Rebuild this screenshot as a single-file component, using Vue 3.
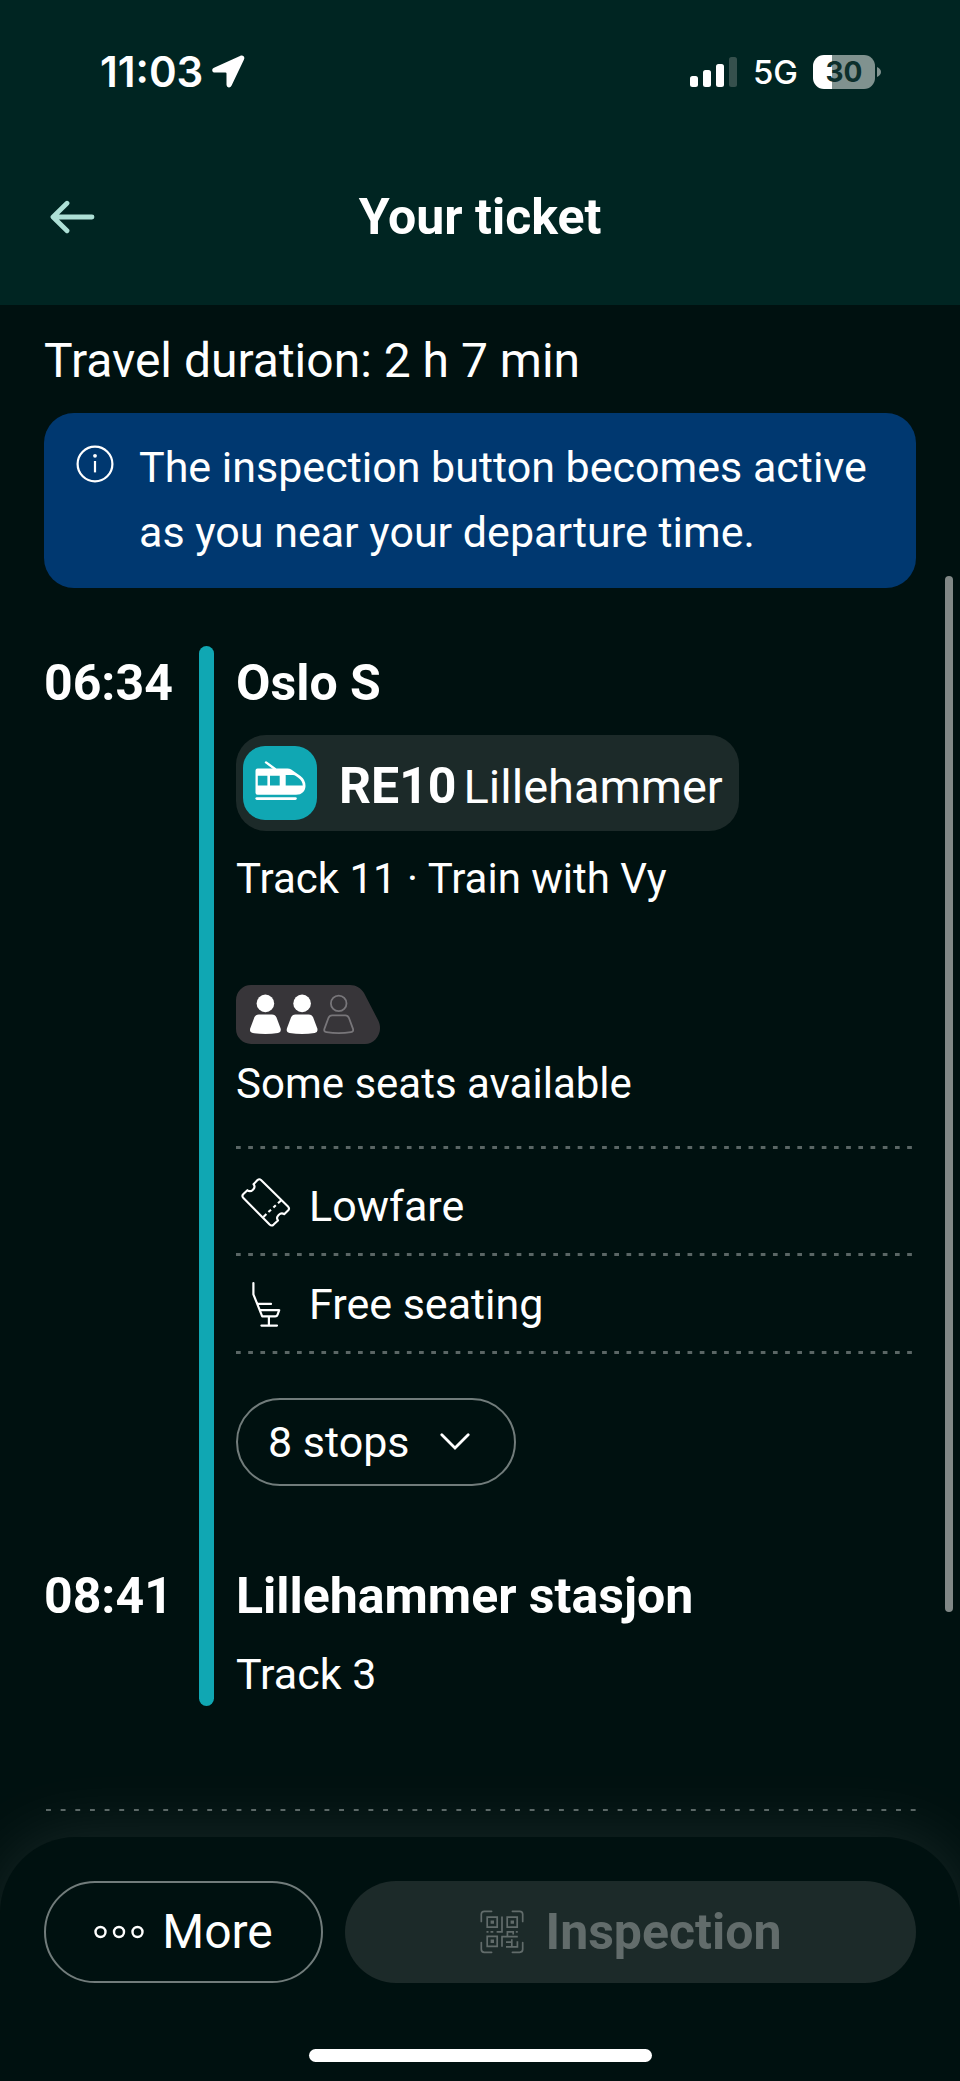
<script setup>
import { ref } from 'vue'

const stopsOpen = ref(false)
const signal = [
  { y: 19, h: 11, on: true },
  { y: 13, h: 17, on: true },
  { y: 7, h: 23, on: true },
  { y: 0, h: 30, on: false }
]
</script>

<template>
  <div class="page">
    <header class="top">
      <div class="status">
        <div class="clock">
          <span>11:03</span>
          <svg width="33" height="34" viewBox="0 0 33 34" aria-hidden="true">
            <path d="M28 .9C31 -.3 33.2 1.6 32 4.6L19.6 30.6C18.2 33.6 14.6 32.9 14.5 29.6V18.6Q14.5 17.6 13.5 17.6H3.2C-.1 17.5 -.9 14.2 2 12.8Z" fill="#fff" />
          </svg>
        </div>
        <div class="radio">
          <svg width="48" height="30" viewBox="0 0 48 30" aria-hidden="true">
            <rect v-for="(bar, i) in signal" :key="i" :x="i * 13" :y="bar.y" width="8" :height="bar.h" rx="2.5" :fill="bar.on ? '#fff' : '#36504d'" />
          </svg>
          <span class="network">5G</span>
          <div class="battery">
            <div class="cell">30</div>
            <svg width="4" height="10" viewBox="0 0 4 10" aria-hidden="true">
              <path d="M0 0Q4 2 4 5T0 10Z" fill="#80928f" />
            </svg>
          </div>
        </div>
      </div>
      <nav class="bar">
        <button class="back" type="button" aria-label="Back">
          <svg width="46" height="34" viewBox="0 0 46 34" aria-hidden="true">
            <path d="M18 3.2L4 17L18 30.8M4.5 17H43" fill="none" stroke="#ade0d6" stroke-width="4.8" stroke-linecap="round" stroke-linejoin="round" />
          </svg>
        </button>
        <h1>Your ticket</h1>
      </nav>
    </header>

    <main class="content">
      <p class="duration">Travel duration: 2 h 7 min</p>

      <div class="notice" role="status">
        <svg width="38" height="38" viewBox="0 0 38 38" aria-hidden="true">
          <circle cx="19" cy="19" r="17.4" fill="none" stroke="#fff" stroke-width="2.2" />
          <circle cx="19" cy="10.8" r="1.9" fill="#fff" />
          <path d="M19 16V27.4" stroke="#fff" stroke-width="2.2" />
        </svg>
        <p>The inspection button becomes active as you near your departure time.</p>
      </div>

      <section class="trip">
        <div class="times">
          <time>06:34</time>
          <time>08:41</time>
        </div>
        <div class="line"></div>
        <div class="leg">
          <h2>Oslo S</h2>
          <div class="chip">
            <svg width="74" height="74" viewBox="0 0 74 74" aria-hidden="true">
              <rect width="74" height="74" rx="22" fill="#10a7b3" />
              <path d="M23 16.4L32 23" stroke="#fff" stroke-width="2.4" stroke-linecap="round" />
              <path fill="#fff" fill-rule="evenodd" d="M14.5 22.5H44.5Q46.5 22.5 48.2 23.6L57.5 30Q62.6 33.8 62.5 40C62.4 45 59 48.8 53 48.8H14.5Q12.5 48.8 12.5 46.8V24.5Q12.5 22.5 14.5 22.5ZM14.8 29.8V39.4H24.4V29.8ZM27 29.8V39.4H36.7V29.8ZM42.7 29V39.4H59.8Q59.4 35 55.5 32L52.8 30Q51.5 29 50 29Z" />
              <path d="M13.8 52.6H52.4" stroke="#fff" stroke-width="2.8" stroke-linecap="round" />
            </svg>
            <p><strong>RE10</strong><span>Lillehammer</span></p>
          </div>
          <p class="track">Track 11 · Train with Vy</p>

          <svg class="seats" width="145" height="59" viewBox="0 0 145 59" aria-hidden="true">
            <path d="M15 0H114C120 0 125 3 128 8L142 35C148 46 140 59 129 59H15A15 15 0 0 1 0 44V15A15 15 0 0 1 15 0Z" fill="#373539" />
            <g v-for="n in 2" :key="n" :transform="`translate(${(n - 1) * 36.7} 0)`" fill="#fff">
              <circle cx="29.4" cy="18.4" r="8.8" />
              <path d="M22.8 29.4H36Q39.2 29.4 40.5 32.5L44.5 43.3Q45.8 47.3 42 48Q29.4 50 16.8 48Q13 47.3 14.3 43.3L18.3 32.5Q19.6 29.4 22.8 29.4Z" />
            </g>
            <g transform="translate(73.3 0)" fill="none" stroke="#78767a" stroke-width="1.8">
              <circle cx="29.4" cy="18.4" r="7.8" />
              <path d="M22.8 30.4H36Q38.6 30.4 39.6 32.8L43.6 43.6Q44.7 46.6 41.6 47.1Q29.4 49 17.2 47.1Q14.1 46.6 15.2 43.6L19.2 32.8Q20.2 30.4 22.8 30.4Z" />
            </g>
          </svg>
          <p class="availability">Some seats available</p>

          <ul class="facts">
            <li class="fare">
              <svg width="60" height="56" viewBox="0 0 60 56" fill="none" stroke="#fff" stroke-width="2.1" stroke-linejoin="round" aria-hidden="true">
                <path d="M25 2L52 28.4Q54 30.4 52 32.5L48.2 36.2C44.6 33.4 39 38.8 42 42.4L37.6 46.6Q35.6 48.4 33.6 46.5L7.4 20Q5.4 18 7.4 16L11.4 12.2C15 15.2 20.6 9.8 17.5 6.2L21.5 2.1Q23.3 .5 25 2Z" />
                <path d="M45.3 22.2L42 25.3M39.8 27.2L37.4 29.5M35 31.7L32.4 34.1M30.4 36L27.4 38.9" />
              </svg>
              <span>Lowfare</span>
            </li>
            <li>
              <svg width="60" height="56" viewBox="0 0 60 56" fill="none" stroke="#fff" stroke-width="2.2" stroke-linecap="round" stroke-linejoin="round" aria-hidden="true">
                <path d="M17.4 7V18.4L26.2 40.4H39.2Q41 40.4 41.6 38.6L43.2 34.2H24M22 27.9H35M32.9 40.8V49.4M25.4 49.6H41" />
              </svg>
              <span>Free seating</span>
            </li>
          </ul>

          <button class="stops" type="button" :aria-expanded="stopsOpen" @click="stopsOpen = !stopsOpen">
            <span>8 stops</span>
            <svg width="30" height="18" viewBox="0 0 30 18" aria-hidden="true">
              <path d="M1.8 1.8L15 15L28.2 1.8" fill="none" stroke="#fff" stroke-width="2.8" stroke-linecap="round" />
            </svg>
          </button>

          <h2 class="arrival">Lillehammer stasjon</h2>
          <p class="platform">Track 3</p>
        </div>
      </section>

      <div class="divider"></div>
    </main>

    <footer class="dock">
      <div class="actions">
        <button class="more" type="button">
          <svg width="50" height="14" viewBox="0 0 50 14" fill="none" stroke="#fff" stroke-width="2.4" aria-hidden="true">
            <circle cx="6.5" cy="7" r="5" />
            <circle cx="25" cy="7" r="5" />
            <circle cx="43.5" cy="7" r="5" />
          </svg>
          <span>More</span>
        </button>
        <button class="inspect" type="button" disabled>
          <svg width="44" height="44" viewBox="0 0 44 44" fill="none" stroke="currentColor" stroke-width="1.7" aria-hidden="true">
            <path stroke-linecap="round" d="M1.3 11.4V4.3Q1.3 1.3 4.3 1.3H11.6M32.4 1.3H39.7Q42.7 1.3 42.7 4.3V11.4M42.7 32.6V39.3Q42.7 42.3 39.7 42.3H32.4M11.6 42.3H4.3Q1.3 42.3 1.3 39.3V32.6" />
            <path d="M7.2 7.2H17.2V17.2H7.2ZM27.2 7.2H37.2V17.2H27.2ZM7.2 26.4H17.2V36.4H7.2Z" />
            <path fill="currentColor" stroke="none" d="M10.6 10.4H14V13.8H10.6ZM30.6 10.4H34V13.8H30.6ZM10.6 29.6H14V33H10.6Z" />
            <path d="M22 6.6V21.8H16.6M6.5 21.8H8.5M10.5 21.8H13.3M27.4 26.4V21.8H33.2V24.4M35.8 21.8H37.8M21.2 26.7H37.8M22 26.7V36.8M26 36.8H37.4V31.2M31.8 29.2V36.8M26 32.2H31.8" />
          </svg>
          <span>Inspection</span>
        </button>
      </div>
      <div class="home"></div>
    </footer>

    <div class="scrollbar"></div>
  </div>
</template>

<style>
body {
  margin: 0;
  background: #001110;
}
</style>

<style scoped>
.page {
  position: relative;
  display: flex;
  flex-direction: column;
  min-height: 100vh;
  background: #001110;
  color: #fff;
  font-family: Roboto, "Noto Sans", sans-serif;
  font-size: 43px;
  line-height: 56px;
}
h1, h2, p, ul {
  margin: 0;
  padding: 0;
}
button {
  margin: 0;
  padding: 0;
  border: 0;
  background: none;
  color: inherit;
  font: inherit;
}
svg {
  display: block;
  flex: none;
}
h1, h2, time {
  font-size: 50px;
  font-weight: 700;
  line-height: 60px;
}

.top {
  padding-bottom: 15px;
  background: #002522;
}
.status {
  display: flex;
  align-items: center;
  justify-content: space-between;
  height: 144px;
  padding: 0 79px 0 100px;
  font-family: Inter, sans-serif;
}
.clock {
  display: flex;
  align-items: center;
  gap: 9px;
  font-size: 42px;
  font-weight: 600;
}
.radio {
  display: flex;
  align-items: center;
}
.network {
  margin: 0 15px;
  font-size: 33px;
  font-weight: 500;
}
.battery {
  display: flex;
  align-items: center;
  gap: 2px;
}
.cell {
  width: 62px;
  height: 34px;
  border-radius: 11px;
  background: linear-gradient(90deg, #fff 19px, #80928f 19px);
  color: #0c2f2c;
  font-size: 28px;
  font-weight: 700;
  line-height: 34px;
  text-align: center;
}
.bar {
  display: grid;
  grid-template-columns: 1fr auto 1fr;
  align-items: center;
  height: 146px;
  padding: 0 44px;
}
.back {
  justify-self: start;
  padding: 8px 5px;
}

.content {
  flex: 1;
  padding: 28px 44px 26px;
}
.duration {
  font-size: 48px;
}
.notice {
  display: flex;
  gap: 25px;
  margin-top: 24px;
  padding: 22px 32px 23px;
  border-radius: 30px;
  background: #003870;
  line-height: 65px;
}
.notice svg {
  margin-top: 10px;
}

.trip {
  display: grid;
  grid-template-columns: 155px 15px minmax(0, 1fr);
  margin-top: 58px;
}
.times {
  display: flex;
  flex-direction: column;
  justify-content: space-between;
  padding: 7px 0 80px;
}
.line {
  border-radius: 8px;
  background: #10a7b3;
}
.leg {
  display: flex;
  flex-direction: column;
  align-items: flex-start;
  padding: 7px 0 4px 22px;
}
.chip {
  display: flex;
  align-items: center;
  gap: 22px;
  height: 96px;
  margin-top: 22px;
  padding: 0 16px 0 7px;
  border-radius: 30px;
  background: #1c2a29;
  font-size: 47px;
}
.chip p {
  padding-top: 6px;
}
.chip strong {
  margin-right: 7px;
  font-size: 50px;
  font-weight: 700;
}
.track,
.availability {
  font-size: 42px;
}
.track {
  margin-top: 20px;
}
.seats {
  margin-top: 78px;
}
.availability {
  margin-top: 12px;
}
.facts {
  align-self: stretch;
  margin-top: 34px;
  list-style: none;
}
.facts,
.facts li,
.divider {
  background-image: linear-gradient(90deg, #5a6665 5px, transparent 5px);
  background-repeat: repeat-x;
}
.facts {
  padding-top: 3px;
  background-size: calc((100% - 8px) / 55) 3px;
}
.facts li {
  display: flex;
  gap: 13px;
  padding: 20px 0 22px;
  background-position: left bottom;
  background-size: calc((100% - 8px) / 55) 3px;
}
.facts .fare {
  padding-top: 29px;
}
.stops {
  display: flex;
  align-items: center;
  gap: 30px;
  height: 88px;
  margin-top: 44px;
  padding: 0 44px 0 30px;
  border: 2px solid #717c7b;
  border-radius: 44px;
}
.arrival {
  margin-top: 80px;
}
.platform {
  margin-top: 20px;
}
.divider {
  height: 2px;
  margin-top: 103px;
  background-position: 2px 0;
  background-size: calc((100% - 7px) / 59) 2px;
}

.dock {
  position: relative;
  padding: 44px 44px 19px;
  border-radius: 76px 76px 0 0;
  background: #001110;
  box-shadow: 0 0 70px rgba(255, 255, 255, 0.1);
}
.actions {
  display: grid;
  grid-template-columns: 279px minmax(0, 1fr);
  gap: 22px;
}
.actions button {
  display: flex;
  align-items: center;
  justify-content: center;
  height: 102px;
  border-radius: 51px;
  font-size: 48px;
}
.actions .more {
  gap: 18px;
  border: 2px solid #717c7b;
}
.actions .inspect {
  gap: 22px;
  background: #1c2a29;
  color: #626c6b;
  font-size: 50px;
  font-weight: 700;
}
.home {
  width: 343px;
  height: 13px;
  margin: 66px auto 0;
  border-radius: 7px;
  background: #fff;
}
.scrollbar {
  position: absolute;
  top: 576px;
  right: 7px;
  width: 8px;
  height: 1036px;
  border-radius: 4px;
  background: #818887;
}
</style>
